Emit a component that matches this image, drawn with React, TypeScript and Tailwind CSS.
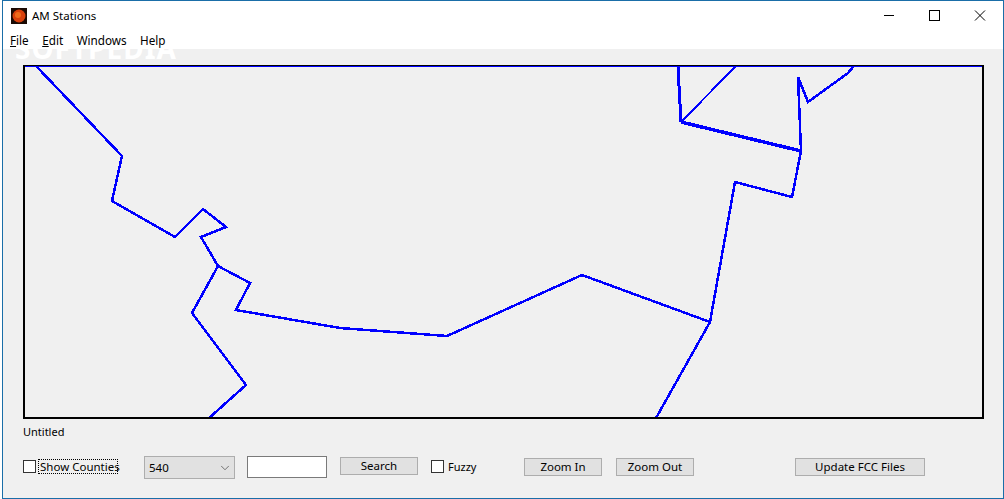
import { ChevronDown } from "lucide-react";

const lines = [
  { d: "M37 67 L122 156 L112 201 L175 237 L203 209 L226 227 L201 237 L218 266 L192 313 L246 385 L209 418", w: 2.5 },
  { d: "M218 266 L250 283 L236 310 L340 328 L447 336 L582 275 L710 322 L735 182 L792 197 L801 151 L798 77 L808 102 L848 73 L853 67", w: 2.5 },
  { d: "M710 322 L656 418", w: 2.5 },
  { d: "M678 67 L681 122", w: 3 },
  { d: "M681 122 L735 67", w: 2 },
  { d: "M681 122 L801 151", w: 3.5 },
];

function Button({ label, className }: { label: string; className: string }) {
  return (
    <button className={`h-[18px] bg-[#e1e1e1] border border-[#adadad] text-[11.5px] leading-none text-black ${className}`}>
      {label}
    </button>
  );
}

function Check({ className }: { className: string }) {
  return <span className={`block w-[13px] h-[13px] bg-white border border-[#333] ${className}`} />;
}

const App = () => {
  return (
    <div className="w-[1004px] h-[499px] bg-white pl-[2px]" style={{ fontFamily: '"Noto Sans", "Liberation Sans", sans-serif' }}>
      <div className="h-full flex flex-col border border-[#1a6ea8] overflow-hidden">
        <div className="h-[30px] flex items-center shrink-0">
          <svg width="16" height="16" viewBox="0 0 16 16" className="ml-[8px]">
            <rect width="16" height="16" fill="#1a0a04" />
            <circle cx="8" cy="8" r="6.5" fill="#d8400c" />
            <circle cx="7" cy="7" r="3" fill="#f06a1a" />
          </svg>
          <span className="ml-[5px] text-[11.5px] text-black">AM Stations</span>
          <div className="ml-auto flex items-center">
            <svg width="46" height="30" viewBox="0 0 46 30">
              <path d="M19 14.5 H29" stroke="#000" strokeWidth="1" />
            </svg>
            <svg width="46" height="30" viewBox="0 0 46 30">
              <rect x="18.5" y="9.5" width="10" height="10" fill="none" stroke="#000" />
            </svg>
            <svg width="46" height="30" viewBox="0 0 46 30">
              <path d="M18 9.5 L28 19.5 M28 9.5 L18 19.5" stroke="#000" strokeWidth="1" />
            </svg>
          </div>
        </div>

        <div className="h-[18px] flex items-center gap-[13.5px] pl-[7px] pt-[2px] text-[11.7px] text-black shrink-0">
          <span><u>F</u>ile</span>
          <span><u>E</u>dit</span>
          <span>Windows</span>
          <span>Help</span>
        </div>

        <div className="relative flex-1 bg-[#f0f0f0] flex flex-col pl-[20px] pt-[16px] overflow-hidden">
          <span className="absolute left-[12px] top-[-19px] text-[28px] leading-[36px] font-bold tracking-[1px] text-white pointer-events-none">
            SOFTPEDIA
          </span>

          <svg width="961" height="354" viewBox="23 65 961 354" className="bg-[#f0f0f0] shrink-0">
            {lines.map((l) => (
              <path key={l.d} d={l.d} fill="none" stroke="#0000ff" strokeWidth={l.w} shapeRendering="crispEdges" />
            ))}
            <path d="M23 65.5 H984" stroke="#000" strokeWidth="1" />
            <path d="M25 66.5 H982" stroke="#0000ff" strokeWidth="1" />
            <path d="M24 65 V419 M983 65 V419 M23 418 H984" stroke="#000" strokeWidth="2" fill="none" />
          </svg>

          <div className="mt-[5px] h-[16px] text-[11px] leading-[16px] text-black">Untitled</div>

          <div className="mt-[16px] flex items-start h-[23px] text-[12px] text-black">
            <Check className="mt-[4px]" />
            <span className="ml-[2px] mt-[3px] w-[80px] h-[15px] pl-[1px] text-[11.5px] leading-[13px] whitespace-nowrap border border-dotted border-black">
              Show Counties
            </span>
            <div className="ml-[26px] w-[91px] h-[23px] bg-[#e1e1e1] border border-[#adadad] flex items-center pl-[4px] pr-[2px] justify-between text-[11.5px]">
              <span>540</span>
              <ChevronDown size={14} strokeWidth={1.2} className="text-[#444]" />
            </div>
            <div className="ml-[12px] w-[80px] h-[22px] bg-white border border-[#7a7a7a]" />
            <Button label="Search" className="ml-[13px] mt-[1px] w-[78px]" />
            <Check className="ml-[13px] mt-[4px]" />
            <span className="ml-[4px] mt-[3px] w-[28px] text-[11px] leading-[15px]">Fuzzy</span>
            <Button label="Zoom In" className="ml-[48px] mt-[2px] w-[78px]" />
            <Button label="Zoom Out" className="ml-[14px] mt-[2px] w-[78px]" />
            <Button label="Update FCC Files" className="ml-[101px] mt-[2px] w-[130px]" />
          </div>
        </div>
      </div>
    </div>
  );
};

export default App;
